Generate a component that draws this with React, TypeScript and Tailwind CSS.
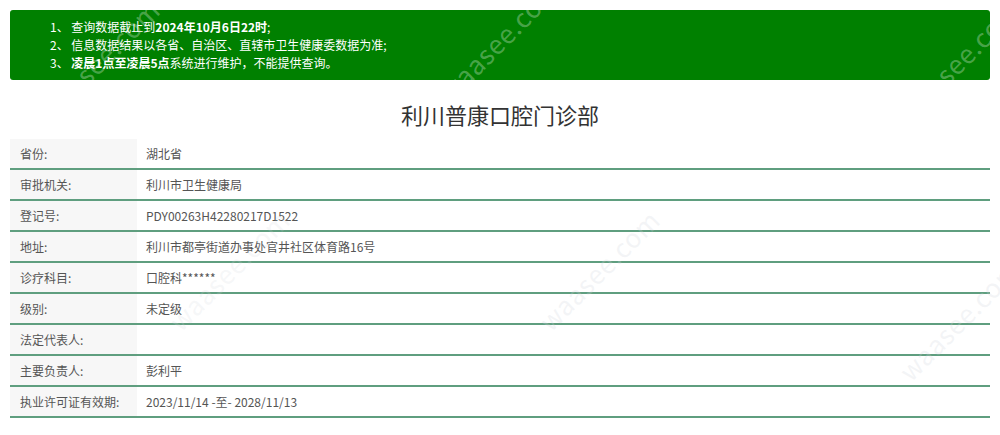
const rows: [string, string][] = [
  ["省份:", "湖北省"],
  ["审批机关:", "利川市卫生健康局"],
  ["登记号:", "PDY00263H42280217D1522"],
  ["地址:", "利川市都亭街道办事处官井社区体育路16号"],
  ["诊疗科目:", "口腔科******"],
  ["级别:", "未定级"],
  ["法定代表人:", ""],
  ["主要负责人:", "彭利平"],
  ["执业许可证有效期:", "2023/11/14 -至- 2028/11/13"],
];

// faint watermark stamped over the page
const marks = [
  { x: 20, y: 40, c: "text-white/30" },
  { x: 420, y: 20, c: "text-white/30" },
  { x: 880, y: 40, c: "text-white/30" },
  { x: 880, y: 300, c: "text-gray-300/25" },
  { x: 520, y: 250, c: "text-gray-300/25" },
  { x: 150, y: 250, c: "text-gray-300/20" },
];

export default function App() {
  return (
    <div className="relative h-[435px] w-[1000px] overflow-hidden bg-white font-['Noto_Sans_CJK_SC',sans-serif] text-[12px]">
      <div className="mx-[10px] mt-[10px] rounded-[3px] bg-[#008000] px-[40px] py-[8px] leading-[18px] text-white">
        <p>1、 查询数据截止到<b>2024年10月6日22时</b>;</p>
        <p>2、 信息数据结果以各省、自治区、直辖市卫生健康委数据为准;</p>
        <p>3、 <b>凌晨1点至凌晨5点</b>系统进行维护，不能提供查询。</p>
      </div>

      <h1 className="mt-[19px] text-center text-[22px] leading-[30px] text-[#333]">利川普康口腔门诊部</h1>

      <div className="mx-[10px] mt-[10px]">
        {rows.map(([k, v]) => (
          <div key={k} className="flex h-[31px] border-b-2 border-[#5f9e7f] text-[#555]">
            <div className="flex w-[127px] items-center bg-[#f7f7f7] pl-[10px]">{k}</div>
            <div className="flex items-center pl-[9px]">{v}</div>
          </div>
        ))}
      </div>

      {marks.map((m, i) => (
        <span
          key={i}
          aria-hidden
          className={`pointer-events-none absolute -rotate-45 text-[26px] tracking-wide ${m.c}`}
          style={{ left: m.x, top: m.y }}
        >
          waasee.com
        </span>
      ))}
    </div>
  );
}
